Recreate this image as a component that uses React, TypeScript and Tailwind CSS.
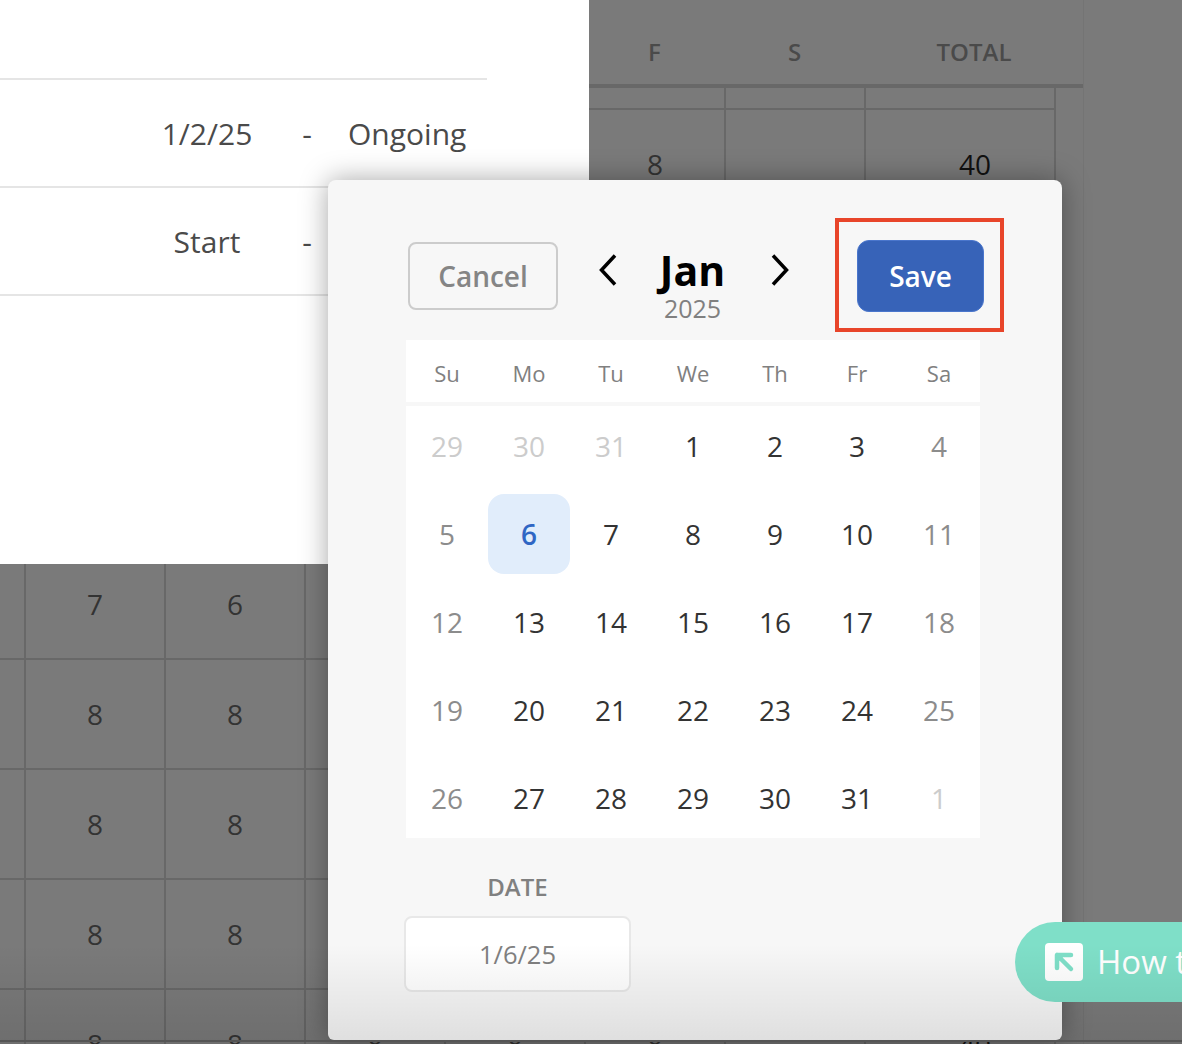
import { ReactNode } from "react";

const weekdays = ["Su", "Mo", "Tu", "We", "Th", "Fr", "Sa"];

// tone: 0 = other month, 1 = weekend, 2 = weekday, 3 = selected
const days: [number, number][] = [
  [29, 0], [30, 0], [31, 0], [1, 2], [2, 2], [3, 2], [4, 1],
  [5, 1], [6, 3], [7, 2], [8, 2], [9, 2], [10, 2], [11, 1],
  [12, 1], [13, 2], [14, 2], [15, 2], [16, 2], [17, 2], [18, 1],
  [19, 1], [20, 2], [21, 2], [22, 2], [23, 2], [24, 2], [25, 1],
  [26, 1], [27, 2], [28, 2], [29, 2], [30, 2], [31, 2], [1, 0],
];

const toneClass = [
  "text-[#cccccc]",
  "text-[#8c8c8c]",
  "text-[#333333]",
  "text-[#2f66c4] font-semibold bg-[#e1edfb] rounded-2xl",
];

const tableRows = [
  ["", "", "", "", "", "8", "", "40"],
  ["", "", "", "", "", "", "", ""],
  ["", "", "", "", "", "", "", ""],
  ["", "", "", "", "", "", "", ""],
  ["", "7", "6", "", "", "", "", ""],
  ["", "8", "8", "", "", "", "", ""],
  ["", "8", "8", "", "", "", "", ""],
  ["", "8", "8", "", "", "", "", ""],
  ["", "8", "8", "8", "8", "8", "", "40"],
];

const columns = "grid grid-cols-[26px_repeat(6,140px)_190px]";

function Cell({ children, last }: { children?: ReactNode; last?: boolean }) {
  return (
    <div
      className={`flex h-[110px] items-center justify-center border-r-2 border-b-2 border-[#686868] text-[28px] ${
        last ? "pl-[30px] font-medium text-[#111111]" : "text-[#333333]"
      }`}
    >
      {children}
    </div>
  );
}

function Chevron({ flip }: { flip?: boolean }) {
  return (
    <svg width="20" height="32" viewBox="0 0 20 32" className={flip ? "mt-[14px] ml-[5px]" : "mt-[14px] ml-[40px]"}>
      <path
        d={flip ? "M2 1.5 L15.5 16 L2 30.5" : "M17 1.5 L3.5 16 L17 30.5"}
        fill="none"
        stroke="#000"
        strokeWidth="3.5"
      />
    </svg>
  );
}

function BackgroundTable() {
  return (
    <div className="w-[1084px] border-r border-[#747474]">
      <div className={`${columns} h-[88px] border-b-4 border-[#686868] text-[24px] font-semibold text-[#4a4a4a]`}>
        <div className="col-start-6 flex items-center justify-center pt-[20px] pr-[3px]">F</div>
        <div className="flex items-center justify-center pt-[20px] pr-[3px]">S</div>
        <div className="flex items-center justify-center pt-[20px] pl-[26px]">TOTAL</div>
      </div>
      <div className={`${columns} h-[22px]`}>
        {Array.from({ length: 8 }).map((_, i) => (
          <div key={i} className="border-r-2 border-b-2 border-[#686868]" />
        ))}
      </div>
      {tableRows.map((row, r) => (
        <div key={r} className={columns}>
          {row.map((value, c) => (
            <Cell key={c} last={c === 7}>
              {value}
            </Cell>
          ))}
        </div>
      ))}
    </div>
  );
}

function AssignmentPanel() {
  const rows = [
    ["1/2/25", "Ongoing"],
    ["Start", ""],
  ];
  return (
    <div className="absolute top-0 left-0 h-[564px] w-[589px] bg-white">
      <div className="h-[80px] w-[487px] border-b-2 border-[#e5e5e5]" />
      {rows.map(([start, end]) => (
        <div
          key={start}
          className="grid h-[108px] w-[487px] grid-cols-[143px_128px_72px_1fr] items-center border-b-2 border-[#e5e5e5] text-[30px] text-[#4a4a4a]"
        >
          <span />
          <span className="text-center">{start}</span>
          <span className="text-center">-</span>
          <span className="pl-[5px]">{end}</span>
        </div>
      ))}
    </div>
  );
}

function DatePicker() {
  return (
    <div className="absolute top-[180px] left-[328px] h-[860px] w-[734px] rounded-t-lg rounded-b-md bg-[#f7f7f7] pt-[60px] pl-[78px] shadow-[0_0_28px_rgba(0,0,0,0.35)]">
      {/* ヘッダー */}
      <div className="flex h-[72px]">
        <button className="mt-[2px] ml-[2px] h-[68px] w-[150px] rounded-lg border-2 border-[#cccccc] pb-[1px] text-[28px] font-semibold text-[#858585]">
          Cancel
        </button>
        <Chevron />
        <div className="mt-[10px] w-[148px] self-start pl-[1px] text-center">
          <div className="h-[41px] text-[41px] leading-[41px] font-bold text-black">Jan</div>
          <div className="mt-[5px] h-[25px] text-[25px] leading-[25px] text-[#808080]">2025</div>
        </div>
        <Chevron flip />
        <button className="ml-[66px] h-[72px] w-[127px] rounded-xl border border-[#4a76cc] bg-[#3763b8] pb-[1px] text-[28px] font-semibold text-white">
          Save
        </button>
      </div>

      {/* カレンダー */}
      <div className="mt-[28px] w-[574px]">
        <div className="grid h-[62px] grid-cols-7 items-center bg-white pt-[4px] text-center text-[22px] text-[#808080]">
          {weekdays.map((d) => (
            <div key={d}>{d}</div>
          ))}
        </div>
        <div className="mt-[4px] h-[432px] bg-white">
          <div className="relative -top-[4px] grid h-[440px] grid-cols-7 grid-rows-5 text-[28px]">
            {days.map(([n, tone], i) => (
              <div key={i} className="flex items-center justify-center">
                <div className={`flex h-[80px] w-[82px] items-center justify-center ${toneClass[tone]}`}>{n}</div>
              </div>
            ))}
          </div>
        </div>
      </div>

      {/* 日付入力 */}
      <div className="mt-[33px] -ml-[2px] w-[227px] text-center">
        <div className="text-[24px] leading-[32px] font-semibold text-[#808080]">DATE</div>
        <div className="mt-[13px] flex h-[76px] items-center justify-center rounded-lg border-2 border-[#e8e8e8] bg-white text-[25.5px] text-[#808080]">
          1/6/25
        </div>
      </div>
    </div>
  );
}

export default function App() {
  return (
    <div
      className="relative h-[1044px] w-[1182px] overflow-hidden bg-[#7a7a7a]"
      style={{ fontFamily: '"Open Sans", sans-serif' }}
    >
      <BackgroundTable />
      <AssignmentPanel />
      <DatePicker />

      {/* 赤い注釈枠 */}
      <div className="absolute top-[218px] left-[835px] h-[114px] w-[169px] border-4 border-[#e8452a]" />

      {/* How to ボタン */}
      <div className="absolute top-[922px] left-[1015px] flex h-[80px] w-[260px] items-center rounded-full bg-[#7fdfc8] pl-[30px] text-[33px] whitespace-nowrap text-white">
        <svg width="38" height="38" viewBox="0 0 38 38">
          <rect width="38" height="38" rx="4" fill="#fff" />
          <path d="M12 12 H20 L12 20 Z" fill="#7fdfc8" />
          <path
            d="M12 25 V12 H26 M12 12 L26 26"
            fill="none"
            stroke="#7fdfc8"
            strokeWidth="4.5"
            strokeLinecap="round"
            strokeLinejoin="round"
          />
        </svg>
        <span className="ml-[14px]">How to</span>
      </div>

      {/* 下端のフェード */}
      <div className="pointer-events-none absolute inset-x-0 bottom-0 h-[100px] bg-gradient-to-b from-transparent to-black/10" />
      <div className="absolute inset-x-0 bottom-[2px] h-[2px] bg-[#555555]" />
    </div>
  );
}
